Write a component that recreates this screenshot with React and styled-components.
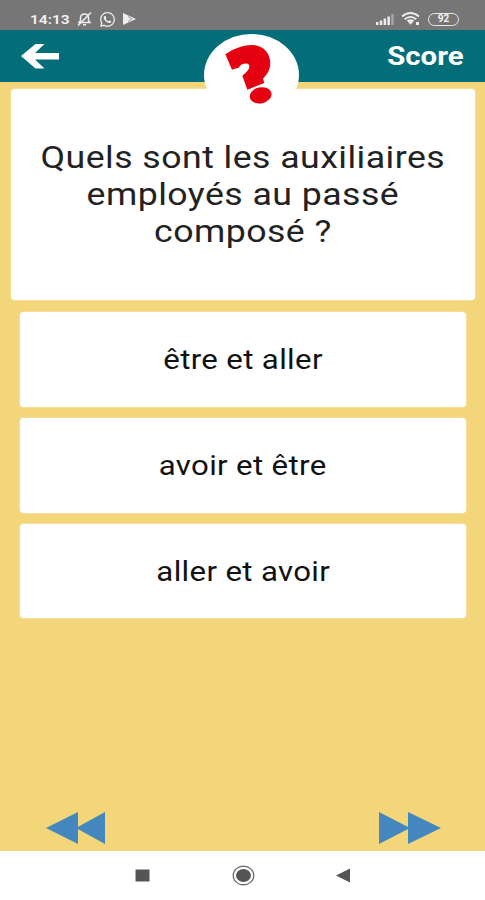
import { useState } from "react";
import styled, { createGlobalStyle } from "styled-components";
import { FaWhatsapp } from "react-icons/fa";

const GlobalStyle = createGlobalStyle`
  * {
    box-sizing: border-box;
  }
  body {
    margin: 0;
    font-family: Roboto, "Liberation Sans", sans-serif;
  }
`;
const Screen = styled.div`
  width: 100%;
  height: 900px;
  display: flex;
  flex-direction: column;
  background: #f3d57a;
  overflow: hidden;
`;
const StatusBar = styled.div`
  height: 30px;
  padding: 7px 26px 0 30px;
  display: flex;
  justify-content: space-between;
  background: #767676;
  color: #f2f2f2;
`;
const StatusGroup = styled.div`
  height: 24px;
  display: flex;
  align-items: center;
  gap: ${(props) => props.$gap};
`;
const Clock = styled.span`
  width: 40px;
  font-size: 13.5px;
  font-weight: 600;
  line-height: 24px;
  white-space: nowrap;
  transform: scaleX(1.15);
  transform-origin: left;
`;
const Battery = styled.span`
  width: 31px;
  height: 13px;
  border: 1.5px solid #e8e8e8;
  border-radius: 7px;
  display: flex;
  align-items: center;
  justify-content: center;
  font-size: 10px;
  font-weight: 700;
  line-height: 10px;
`;
const Header = styled.header`
  position: relative;
  height: 52px;
  padding: 0 21px;
  display: flex;
  align-items: center;
  justify-content: space-between;
  background: #036e79;
  color: #fff;
`;
const IconButton = styled.button`
  border: 0;
  padding: 0;
  background: none;
  display: flex;
`;
const Score = styled.span`
  font-size: 26px;
  font-weight: 700;
  line-height: 52px;
  transform: scaleX(1.13);
  transform-origin: right;
`;
/* 헤더와 질문 카드 위에 겹치는 원 */
const Badge = styled.div`
  position: absolute;
  z-index: 1;
  top: 4px;
  left: 204px;
  width: 95px;
  height: 82px;
  border-radius: 50%;
  background: #fff;
`;
const Main = styled.main`
  flex: 1;
  padding: 7px 10px 0 11px;
  display: flex;
  flex-direction: column;
`;
const Question = styled.div`
  height: 211px;
  border-radius: 4px;
  display: flex;
  align-items: center;
  justify-content: center;
  background: #fff;
  color: #222;
  box-shadow: 0 0 2px rgba(255, 255, 255, 0.8);
`;
const QuestionText = styled.p`
  margin: 0;
  flex: none;
  font-size: 31px;
  line-height: 37px;
  letter-spacing: 0.4px;
  text-align: center;
  white-space: nowrap;
  transform: scaleX(1.15);
`;
const Answers = styled.div`
  padding: 12px 9px 0;
  display: flex;
  flex-direction: column;
  gap: 11px;
`;
const Answer = styled.button`
  height: 94.8px;
  border: 0;
  border-radius: 4px;
  padding: 2px 0 0;
  background: #fff;
  color: #111;
  font-family: inherit;
  font-size: 27px;
  letter-spacing: 0.3px;
  box-shadow: 0 0 2px rgba(255, 255, 255, 0.8);
`;
const AnswerText = styled.span`
  display: inline-block;
  transform: scaleX(1.155);
`;
const Pager = styled.div`
  margin-top: auto;
  padding: 0 34px 7px 35px;
  display: flex;
  justify-content: space-between;
`;
const NavBar = styled.nav`
  height: 49px;
  padding: 0 135px;
  display: flex;
  align-items: center;
  justify-content: space-between;
  background: #fff;
`;

const answers = ["être et aller", "avoir et être", "aller et avoir"];

function StatusIcons() {
  return (
    <StatusGroup $gap="7px">
      <svg width="18" height="13" viewBox="0 0 18 13" fill="#eee">
        <path d="M0 9h2.5v3H0zM3.8 7.5h2.5V12H3.8zM7.6 5.5h2.5V12H7.6z" />
        <path d="M11.400 3.5h2.5V12h-2.5z" />
        <path d="M15.200 1h2.5v11h-2.5z" opacity="0.4" />
      </svg>
      <svg width="20" height="14" viewBox="0 0 20 14" fill="none">
        <g stroke="#eee" strokeWidth="1.8">
          <path d="M1 4.5Q9.500 -2.500 18 4.500" />
          <path d="M3.700 7.200Q9.500 2.500 15.300 7.200" />
        </g>
        <path d="M5.800 8.600Q9.500 5.800 13.200 8.600L9.500 12.800z" fill="#eee" />
        <path d="M15 10h3v3h-3z" fill="#eee" />
      </svg>
      <Battery>92</Battery>
    </StatusGroup>
  );
}

function App() {
  const [score, setScore] = useState(0);
  return (
    <Screen>
      <GlobalStyle />
      <StatusBar>
        <StatusGroup $gap="7px">
          <Clock>14:13</Clock>
          <svg
            width="15"
            height="14"
            viewBox="0 0 15 14"
            fill="none"
            stroke="#eee"
            strokeWidth="1.5"
          >
            <path d="M2 10.500H13L11.500 8.500V5.500Q11 2 7.500 2T3.500 5.500V8.500z" />
            <path d="M6 12.800H9M14 .500L1 13.500" />
          </svg>
          <FaWhatsapp size={17} />
          <svg width="14" height="14" viewBox="0 0 14 14">
            <path d="M0 1L13 7 0 13z" fill="#eee" />
            <path d="M5 4.500L9 7 5 9.500" stroke="#999" fill="none" />
          </svg>
        </StatusGroup>
        <StatusIcons />
      </StatusBar>
      <Header>
        <IconButton aria-label="retour">
          <svg width="38" height="28" viewBox="0 0 38 28" fill="#fff">
            <path d="M0 14L14.500 2H23.500L14 11H38V17.500H14L23.500 26.500H14.500z" />
          </svg>
        </IconButton>
        <Badge>
          <svg width="95" height="82" viewBox="72 42 285 246" fill="#e50012">
            <path d="M136 103C160 86 190 74 219 75C250 77 270 99 271 129C271 152 258 166 249 176L253 189L202 209L187 167C199 157 209 148 208 137C205 128 193 130 184 134C179 137 178 139 179 142L156 149Z" />
            <ellipse
              cx="242"
              cy="226"
              rx="33"
              ry="24"
              transform="rotate(-13 242 226)"
            />
          </svg>
        </Badge>
        <Score onClick={() => setScore(score + 1)}>Score</Score>
      </Header>
      <Main>
        <Question>
          <QuestionText>
            Quels sont les auxiliaires
            <br />
            employés au passé
            <br />
            composé ?
          </QuestionText>
        </Question>
        <Answers>
          {answers.map((answer) => (
            <Answer key={answer}>
              <AnswerText>{answer}</AnswerText>
            </Answer>
          ))}
        </Answers>
        <Pager>
          <IconButton aria-label="précédent">
            <svg width="60" height="32" viewBox="0 0 60 32" fill="#4487bf">
              <path d="M0 16L32 0V32zM30 16L59 0V32z" />
            </svg>
          </IconButton>
          <IconButton aria-label="suivant">
            <svg width="62" height="32" viewBox="0 0 62 32" fill="#4487bf">
              <path d="M0 0L31 16 0 32zM29 0L62 16 29 32z" />
            </svg>
          </IconButton>
        </Pager>
      </Main>
      <NavBar>
        <svg width="15" height="13" viewBox="0 0 15 13">
          <path d="M.500 .500H14.500V12.500H.500z" fill="#555" />
        </svg>
        <svg width="23" height="21" viewBox="0 0 23 21">
          <ellipse
            cx="11.5"
            cy="10.5"
            rx="10.3"
            ry="9.300"
            fill="none"
            stroke="#666"
            strokeWidth="1.2"
          />
          <ellipse cx="11.5" cy="10.5" rx="7.5" ry="6.500" fill="#555" />
        </svg>
        <svg width="14" height="15" viewBox="0 0 14 15">
          <path d="M0 7.500L14 .500V14.500z" fill="#555" />
        </svg>
      </NavBar>
    </Screen>
  );
}

export default App;
